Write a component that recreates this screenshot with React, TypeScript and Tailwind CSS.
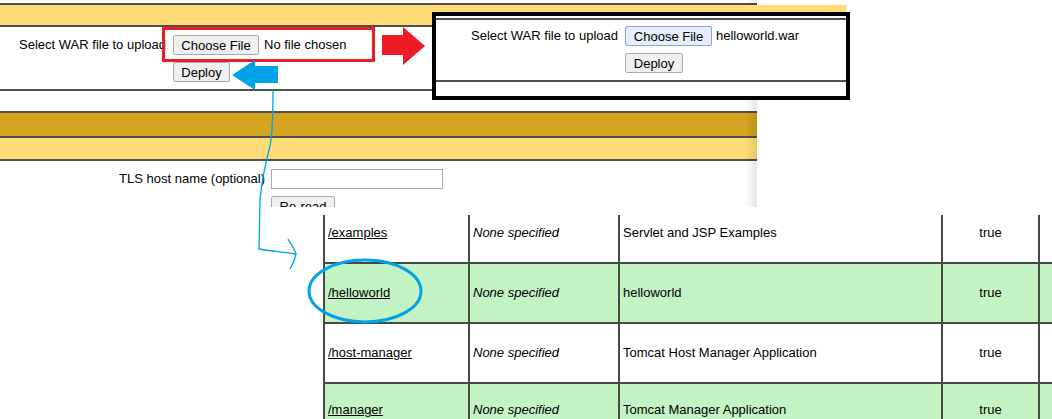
const line = 'h-[2px] bg-[#4f4f4f]';

function Btn({ label, w, focused }: { label: string; w: string; focused?: boolean }) {
  return (
    <div
      className={`${w} h-[20px] flex items-center justify-center rounded-[2px] border text-[13px] leading-none ${
        focused ? 'bg-[#e5eef9] border-[#7ea7da]' : 'bg-[#efefef] border-[#a9a9a9]'
      }`}
    >
      {label}
    </div>
  );
}

function LeftShot() {
  return (
    <div className="relative w-[757px] h-[207px] overflow-hidden">
      <div className="h-[3px]" />
      <div className={line} />
      <div className="h-[20px] bg-[#ffdc75]" />
      <div className={line} />
      <div className="h-[62px] pt-[8px] grid grid-cols-[166px_auto] gap-x-[7px] gap-y-[7px] content-start items-center">
        <div className="text-right whitespace-nowrap">Select WAR file to upload</div>
        <div className="flex items-center gap-[5px]">
          <Btn label="Choose File" w="w-[86px]" />
          <span>No file chosen</span>
        </div>
        <div />
        <Btn label="Deploy" w="w-[57px]" />
      </div>
      <div className={line} />
      <div className="h-[20px]" />
      <div className={line} />
      <div className="h-[23px] bg-[#d2a41f]" />
      <div className={line} />
      <div className="h-[21px] bg-[#ffdc75]" />
      <div className={line} />
      <div className="pt-[8px] grid grid-cols-[265px_auto] gap-x-[6px] gap-y-[7px] items-center">
        <div className="text-right whitespace-nowrap">TLS host name (optional)</div>
        <div className="w-[172px] h-[20px] border border-[#a9a9a9] bg-white" />
        <div />
        <Btn label="Re-read" w="w-[64px]" />
      </div>
      <div className="absolute right-0 top-0 w-[12px] h-full bg-gradient-to-r from-transparent to-black/10" />
    </div>
  );
}

function DeployBox() {
  return (
    <div className="absolute left-[432px] top-[5px] flex flex-col">
      <div className="w-[414px] h-[7px] bg-[#ffdc75]" />
      <div className="w-[418px] h-[88px] border-4 border-black bg-white">
        <div className="h-[2px]" />
        <div className={line} />
        <div className="h-[60px] pt-[6px] grid grid-cols-[182px_auto] gap-x-[7px] gap-y-[7px] content-start items-center">
          <div className="text-right whitespace-nowrap">Select WAR file to upload</div>
          <div className="flex items-center gap-[4px]">
            <Btn label="Choose File" w="w-[87px]" focused />
            <span>helloworld.war</span>
          </div>
          <div />
          <Btn label="Deploy" w="w-[58px]" />
        </div>
        <div className={line} />
      </div>
    </div>
  );
}

const rows = [
  { path: '/examples', name: 'Servlet and JSP Examples', green: false, h: 'h-[47px] pb-[11px]' },
  { path: '/helloworld', name: 'helloworld', green: true, h: 'h-[58px]' },
  { path: '/host-manager', name: 'Tomcat Host Manager Application', green: false, h: 'h-[58px]' },
  { path: '/manager', name: 'Tomcat Manager Application', green: true, h: 'h-[52px]' },
];

function AppTable() {
  return (
    <div className="ml-[323px] w-[729px] pt-[8px] bg-white">
      <div className="grid grid-cols-[143px_148px_321px_95px_1fr] gap-[2px] pl-[2px] bg-[#484848]">
        {rows.map((r) => {
          const bg = r.green ? 'bg-[#c3f3c3]' : 'bg-white';
          const cell = `${bg} ${r.h} flex items-center px-[3px] whitespace-nowrap`;
          return [
            <div key={r.path + 'a'} className={cell}>
              <span className="underline">{r.path}</span>
            </div>,
            <div key={r.path + 'b'} className={`${cell} italic`}>None specified</div>,
            <div key={r.path + 'c'} className={cell}>{r.name}</div>,
            <div key={r.path + 'd'} className={`${cell} justify-center`}>true</div>,
            <div key={r.path + 'e'} className={cell} />,
          ];
        })}
      </div>
    </div>
  );
}

function Marks() {
  return (
    <svg className="absolute left-0 top-0 pointer-events-none" width="1052" height="419" viewBox="0 0 1052 419">
      <rect x="163.5" y="28.5" width="210" height="32" fill="none" stroke="#ed1c24" strokeWidth="3" />
      <polygon points="382,35 403,35 403,27 425,46 403,65 403,55 382,55" fill="#ed1c24" />
      <polygon points="232,75 255,60 255,66 278,66 278,83 255,83 255,90" fill="#00a2e8" />
      <path
        d="M273 90 C273 112 273 130 270 146 C266 162 262 176 260 200 L259 249 C270 251 284 252 296 254"
        fill="none"
        stroke="#00a2e8"
        strokeWidth="1.3"
      />
      <path d="M288 239 C292 246 295 250 296 254 C295 259 293 264 290 269" fill="none" stroke="#00a2e8" strokeWidth="1.3" />
      <ellipse cx="365" cy="291" rx="56" ry="31" fill="none" stroke="#00a2e8" strokeWidth="3" />
    </svg>
  );
}

export default function App() {
  return (
    <div className="relative w-[1052px] h-[419px] overflow-hidden bg-white text-black text-[13px] font-['Liberation_Sans',Arial,sans-serif]">
      <LeftShot />
      <AppTable />
      <DeployBox />
      <Marks />
    </div>
  );
}
